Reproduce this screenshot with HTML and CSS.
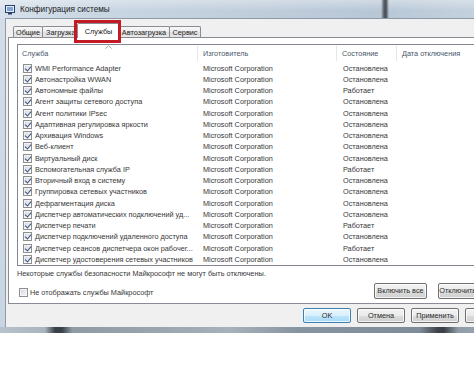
FILE: index.html
```html
<!DOCTYPE html>
<html lang="ru">
  <head>
    <meta charset="UTF-8" />
    <title>Конфигурация системы</title>
    <link rel="stylesheet" href="styles.css">
  </head>
  <body>
    <div class="window">
      <div class="titlebar">
        <svg class="app-icon" width="10" height="10" viewBox="0 0 10 10">
          <rect x="0.5" y="0.5" width="9" height="7" fill="#e4ecf5" stroke="#2b3f6b"/>
          <rect x="2" y="2" width="6" height="4" fill="#7fa6d6"/>
          <rect x="3" y="8" width="4" height="1.5" fill="#2b3f6b"/>
        </svg>
        <span class="title">Конфигурация системы</span>
      </div>
      <div class="frame">
        <div class="client">
          <div class="tabs">
            <div class="tab tab-general">Общие</div>
            <div class="tab tab-boot">Загрузка</div>
            <div class="tab tab-services active">Службы<span class="mark"></span></div>
            <div class="tab tab-startup">Автозагрузка</div>
            <div class="tab tab-tools">Сервис</div>
          </div>

          <div class="panel">
            <div class="list">
              <div class="list-head">
                <span class="sorted">Служба
                  <svg class="sort-arrow" width="7" height="4" viewBox="0 0 7 4"><path d="M0.5 3.5 L3.5 0.8 L6.5 3.5" fill="none" stroke="#9aa3ad" stroke-width="1"/></svg>
                </span>
                <span>Изготовитель</span>
                <span>Состояние</span>
                <span class="last">Дата отключения</span>
              </div>
              <div class="rows">
                <div class="row"><span class="name"><i class="cb on"></i>WMI Performance Adapter</span><span>Microsoft Corporation</span><span>Остановлена</span><span></span></div>
                <div class="row"><span class="name"><i class="cb on"></i>Автонастройка WWAN</span><span>Microsoft Corporation</span><span>Остановлена</span><span></span></div>
                <div class="row"><span class="name"><i class="cb on"></i>Автономные файлы</span><span>Microsoft Corporation</span><span>Работает</span><span></span></div>
                <div class="row"><span class="name"><i class="cb on"></i>Агент защиты сетевого доступа</span><span>Microsoft Corporation</span><span>Остановлена</span><span></span></div>
                <div class="row"><span class="name"><i class="cb on"></i>Агент политики IPsec</span><span>Microsoft Corporation</span><span>Остановлена</span><span></span></div>
                <div class="row"><span class="name"><i class="cb on"></i>Адаптивная регулировка яркости</span><span>Microsoft Corporation</span><span>Остановлена</span><span></span></div>
                <div class="row"><span class="name"><i class="cb on"></i>Архивация Windows</span><span>Microsoft Corporation</span><span>Остановлена</span><span></span></div>
                <div class="row"><span class="name"><i class="cb on"></i>Веб-клиент</span><span>Microsoft Corporation</span><span>Остановлена</span><span></span></div>
                <div class="row"><span class="name"><i class="cb on"></i>Виртуальный диск</span><span>Microsoft Corporation</span><span>Остановлена</span><span></span></div>
                <div class="row"><span class="name"><i class="cb on"></i>Вспомогательная служба IP</span><span>Microsoft Corporation</span><span>Работает</span><span></span></div>
                <div class="row"><span class="name"><i class="cb on"></i>Вторичный вход в систему</span><span>Microsoft Corporation</span><span>Остановлена</span><span></span></div>
                <div class="row"><span class="name"><i class="cb on"></i>Группировка сетевых участников</span><span>Microsoft Corporation</span><span>Остановлена</span><span></span></div>
                <div class="row"><span class="name"><i class="cb on"></i>Дефрагментация диска</span><span>Microsoft Corporation</span><span>Остановлена</span><span></span></div>
                <div class="row"><span class="name"><i class="cb on"></i>Диспетчер автоматических подключений уд...</span><span>Microsoft Corporation</span><span>Остановлена</span><span></span></div>
                <div class="row"><span class="name"><i class="cb on"></i>Диспетчер печати</span><span>Microsoft Corporation</span><span>Работает</span><span></span></div>
                <div class="row"><span class="name"><i class="cb on"></i>Диспетчер подключений удаленного доступа</span><span>Microsoft Corporation</span><span>Остановлена</span><span></span></div>
                <div class="row"><span class="name"><i class="cb on"></i>Диспетчер сеансов диспетчера окон рабочег...</span><span>Microsoft Corporation</span><span>Работает</span><span></span></div>
                <div class="row"><span class="name"><i class="cb on"></i>Диспетчер удостоверения сетевых участников</span><span>Microsoft Corporation</span><span>Остановлена</span><span></span></div>
              </div>
            </div>

            <p class="note">Некоторые службы безопасности Майкрософт не могут быть отключены.</p>

            <div class="options">
              <label class="hide-ms"><i class="cb"></i>Не отображать службы Майкрософт</label>
              <div class="panel-buttons">
                <button class="btn">Включить все</button>
                <button class="btn">Отключить все</button>
              </div>
            </div>
          </div>

          <div class="dialog-buttons">
            <button class="btn default">OK</button>
            <button class="btn">Отмена</button>
            <button class="btn">Применить</button>
            <button class="btn">Справка</button>
          </div>
        </div>
      </div>
    </div>
  </body>
</html>
```

FILE: styles.css
```css
* {
  box-sizing: border-box;
}
body {
  margin: 0;
  width: 474px;
  height: 368px;
  overflow: hidden;
  background: #fff;
  font-family: "Liberation Sans", Arial, sans-serif;
  font-size: 7.3px;
  color: #383838;
}
.window {
  width: 525px;
}

/* title bar */
.titlebar {
  height: 18px;
  display: flex;
  align-items: center;
  gap: 5px;
  padding: 1px 0 0 5px;
  background:
    linear-gradient(90deg, transparent 381px, rgba(40,44,50,.7) 384px, rgba(40,44,50,.8) 386px, transparent 389px),
    linear-gradient(180deg, rgba(255,255,255,.35), rgba(255,255,255,0) 60%),
    linear-gradient(90deg, #d6e0ea 0, #c8d5e2 110px, #bfcddb 260px, #b8c7d6 380px, #c3d1de 474px);
}
.app-icon {
  flex: none;
}
.title {
  font-size: 8.2px;
  color: #1c1c1c;
}

/* window frame */
.frame {
  padding: 0 5px 6px;
  background:
    linear-gradient(90deg, #b8c2cc 0, #a9b4bf 45px, #3a4047 55px, #3a4047 62px, #8f9aa5 72px, #9aa5b0 160px, #a7b1bb 230px, #8693a0 300px, #7e8b98 420px, #3d4248 438px, #3d4248 444px, #909ca8 458px, #a8b3bd 525px) bottom / 100% 6px no-repeat,
    linear-gradient(180deg, #d3dde7, #c8d4e0);
}
.client {
  background: #f0f0f0;
  border: 1px solid #8d9aa8;
  border-bottom: 0;
  padding: 0 6px 4px 2px;
}

/* tabs */
.tabs {
  height: 18px;
  display: flex;
  align-items: flex-end;
  padding-left: 5px;
}
.tab {
  height: 11px;
  margin-left: -1px;
  border: 1px solid #898c95;
  border-bottom: 0;
  border-radius: 2px 2px 0 0;
  background: linear-gradient(#f8f8f8, #ececec 50%, #e0e0e0 50%, #e6e6e6);
  display: flex;
  align-items: center;
  justify-content: center;
  white-space: nowrap;
  overflow: hidden;
  color: #222;
}
.tab-general { width: 30px; margin-left: 0; }
.tab-boot { width: 37px; justify-content: flex-start; padding-left: 3px; }
.tab-services { width: 43px; }
.tab-startup { width: 52px; }
.tab-tools { width: 32px; }
.tab.active {
  position: relative;
  z-index: 2;
  height: 15px;
  margin: 0 -1px -1px -2px;
  background: #fff;
  overflow: visible;
}
.tab .mark {
  position: absolute;
  left: -4px;
  right: -2px;
  top: -4px;
  bottom: -5px;
  border: 3px solid #c31a24;
}

/* services panel */
.panel {
  height: 267px;
  border: 1px solid #898c95;
  background: #fff;
  padding: 6px 8px 0;
}
.list {
  height: 222px;
  border: 1px solid #828790;
}
.list-head,
.row {
  display: grid;
  grid-template-columns: 180px 139px 60px 1fr;
  align-items: center;
}
.list-head {
  height: 17.5px;
  color: #48576b;
}
.list-head span {
  position: relative;
  height: 15px;
  display: flex;
  align-items: center;
  padding-left: 5px;
  border-right: 1px solid #e3e7ec;
  white-space: nowrap;
}
.list-head .sorted {
  padding-left: 4px;
}
.list-head .last {
  border-right: 0;
}
.sort-arrow {
  position: absolute;
  left: 87px;
  top: -1px;
}
.row {
  height: 11.25px;
}
.row span {
  padding-left: 5px;
  white-space: nowrap;
  overflow: hidden;
}
.row span:nth-child(3) {
  padding-left: 6px;
}
.row .name {
  display: flex;
  align-items: center;
  gap: 3px;
}

/* checkboxes */
.cb {
  position: relative;
  flex: none;
  display: inline-block;
  width: 9px;
  height: 9px;
  border: 1px solid #8e8f8f;
  background: linear-gradient(135deg, #d4d7dc, #f8f8f8);
  box-shadow: inset 0 0 0 1px rgba(255,255,255,.6);
}
.cb.on::after {
  content: "";
  position: absolute;
  left: 2px;
  top: 0;
  width: 3px;
  height: 5px;
  border-right: 1.6px solid #3a5185;
  border-bottom: 1.6px solid #3a5185;
  transform: rotate(40deg);
}

.note {
  margin: 3px 0 0;
  line-height: 10px;
  white-space: nowrap;
}
.options {
  height: 17px;
  margin-top: 3px;
  display: flex;
  align-items: center;
}
.hide-ms {
  display: flex;
  align-items: center;
  gap: 2px;
  margin: 3px 0 0 2px;
  white-space: nowrap;
}
.panel-buttons {
  margin: 0 13px 0 auto;
  display: flex;
  gap: 11px;
}

/* buttons */
.btn {
  width: 53px;
  height: 16px;
  padding: 0;
  border: 1px solid #707070;
  border-radius: 2px;
  background: linear-gradient(#f2f2f2, #ebebeb 50%, #dddddd 50%, #cfcfcf);
  box-shadow: inset 0 0 0 1px rgba(255,255,255,.75);
  font: inherit;
  color: #2a2a2a;
  white-space: nowrap;
}
.btn.default {
  border-color: #3c7fb1;
  background: linear-gradient(#eaf6fd, #d9f0fc 50%, #bee6fd 50%, #a7d9f5);
}
.dialog-buttons {
  margin-top: 4px;
  display: flex;
  justify-content: flex-end;
  gap: 6px;
}
.dialog-buttons .btn {
  width: 48px;
  height: 15px;
}
```
